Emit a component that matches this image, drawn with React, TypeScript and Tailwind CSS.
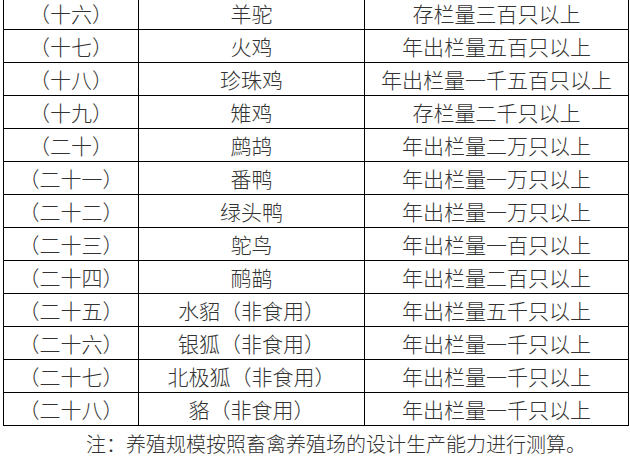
const rows: [string, string, string][] = [
  ["（十六）", "羊驼", "存栏量三百只以上"],
  ["（十七）", "火鸡", "年出栏量五百只以上"],
  ["（十八）", "珍珠鸡", "年出栏量一千五百只以上"],
  ["（十九）", "雉鸡", "存栏量二千只以上"],
  ["（二十）", "鹧鸪", "年出栏量二万只以上"],
  ["（二十一）", "番鸭", "年出栏量一万只以上"],
  ["（二十二）", "绿头鸭", "年出栏量一万只以上"],
  ["（二十三）", "鸵鸟", "年出栏量一百只以上"],
  ["（二十四）", "鸸鹋", "年出栏量二百只以上"],
  ["（二十五）", "水貂（非食用）", "年出栏量五千只以上"],
  ["（二十六）", "银狐（非食用）", "年出栏量一千只以上"],
  ["（二十七）", "北极狐（非食用）", "年出栏量一千只以上"],
  ["（二十八）", "貉（非食用）", "年出栏量一千只以上"],
];

export default function App() {
  return (
    <div className="w-[630px] h-[458px] overflow-hidden bg-white text-[#333] font-['Microsoft_YaHei','Noto_Sans_CJK_SC',sans-serif] font-light text-[21px] leading-none">
      <table className="ml-[3px] mt-[-4px] w-[625px] table-fixed border-collapse">
        <colgroup>
          <col className="w-[135px]" />
          <col className="w-[226px]" />
          <col className="w-[264px]" />
        </colgroup>
        <tbody>
          {rows.map(([no, name, scale]) => (
            <tr key={no} className="h-[33px]">
              <td className="border border-black p-0 text-center align-middle">{no}</td>
              <td className="border border-black p-0 text-center align-middle">{name}</td>
              <td className="border border-black p-0 text-center align-middle whitespace-nowrap">{scale}</td>
            </tr>
          ))}
        </tbody>
      </table>
      <p className="pl-[86px] pt-[8px] text-[20px]">注：养殖规模按照畜禽养殖场的设计生产能力进行测算。</p>
    </div>
  );
}
